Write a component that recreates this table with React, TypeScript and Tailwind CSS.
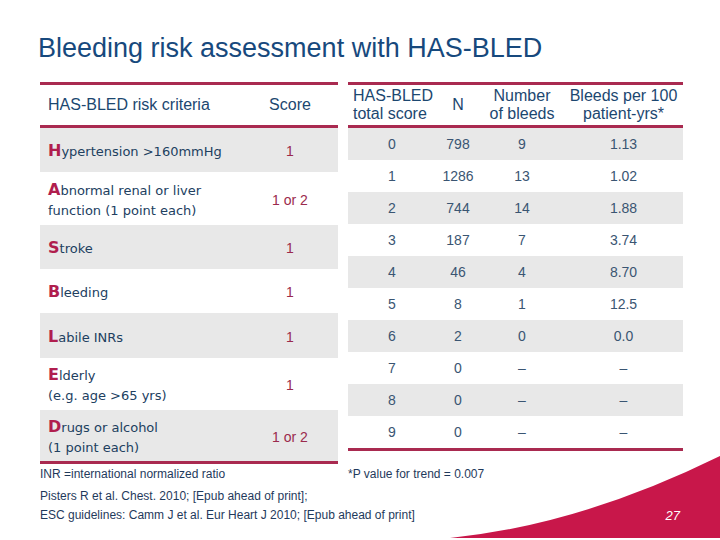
const criteria = [
  { lead: "H", text: "ypertension >160mmHg", score: "1", h: "h-[44px]", gray: true },
  { lead: "A", text: "bnormal renal or liver", sub: "function (1 point each)", score: "1 or 2", h: "h-[53px]", gray: false },
  { lead: "S", text: "troke", score: "1", h: "h-[44px]", gray: true },
  { lead: "B", text: "leeding", score: "1", h: "h-[44px]", gray: false },
  { lead: "L", text: "abile INRs", score: "1", h: "h-[45px]", gray: true },
  { lead: "E", text: "lderly", sub: "(e.g. age >65 yrs)", score: "1", h: "h-[52px]", gray: false },
  { lead: "D", text: "rugs or alcohol", sub: "(1 point each)", score: "1 or 2", h: "h-[51px]", gray: true },
];

const results = [
  ["0", "798", "9", "1.13"],
  ["1", "1286", "13", "1.02"],
  ["2", "744", "14", "1.88"],
  ["3", "187", "7", "3.74"],
  ["4", "46", "4", "8.70"],
  ["5", "8", "1", "12.5"],
  ["6", "2", "0", "0.0"],
  ["7", "0", "–", "–"],
  ["8", "0", "–", "–"],
  ["9", "0", "–", "–"],
];

const head = "font-['Liberation_Sans',Arial,sans-serif] text-[16px] text-[#1c4770]";

export default function App() {
  return (
    <div className="relative w-[720px] h-[540px] overflow-hidden bg-white">
      <h1 className="pt-[32px] pl-[38px] font-['Liberation_Sans',Arial,sans-serif] text-[27px] leading-[32px] text-[#17497d]">
        Bleeding risk assessment with HAS-BLED
      </h1>

      <div className="mt-[18px] flex items-start gap-[10px] pl-[40px]">
        {/* criteria */}
        <div className="w-[298px] border-b-[3px] border-[#a92a50]">
          <div className={`flex h-[46px] items-center border-y-[3px] border-[#a92a50] ${head}`}>
            <div className="flex-1 pl-[8px]">HAS-BLED risk criteria</div>
            <div className="w-[96px] text-center">Score</div>
          </div>
          {criteria.map((c) => (
            <div key={c.lead} className={`flex items-center pt-[3px] ${c.h} ${c.gray ? "bg-[#e8e8e8]" : ""}`}>
              <div className="flex-1 pl-[8px] font-['DejaVu_Sans',Verdana,sans-serif] text-[13px] leading-[20px] text-[#21405f]">
                <div>
                  <span className="text-[16px] font-bold text-[#b01e4e]">{c.lead}</span>
                  {c.text}
                </div>
                {c.sub && <div>{c.sub}</div>}
              </div>
              <div className="w-[96px] text-center font-['Liberation_Sans',Arial,sans-serif] text-[14px] text-[#9b2a4d]">
                {c.score}
              </div>
            </div>
          ))}
        </div>

        {/* results */}
        <div className="w-[335px] border-b-[3px] border-[#a92a50]">
          <div className={`flex h-[46px] items-center border-y-[3px] border-[#a92a50] leading-[18px] ${head}`}>
            <div className="w-[88px] pl-[5px]">
              HAS-BLED
              <br />
              total score
            </div>
            <div className="w-[44px] text-center">N</div>
            <div className="w-[84px] text-center">
              Number
              <br />
              of bleeds
            </div>
            <div className="flex-1 text-center">
              Bleeds per 100
              <br />
              patient-yrs*
            </div>
          </div>
          {results.map((r, i) => (
            <div
              key={r[0]}
              className={`flex h-[32px] items-center font-['Liberation_Sans',Arial,sans-serif] text-[14px] text-[#3a5572] ${i % 2 === 0 ? "bg-[#e8e8e8]" : ""}`}
            >
              <div className="w-[88px] text-center">{r[0]}</div>
              <div className="w-[44px] text-center">{r[1]}</div>
              <div className="w-[84px] text-center">{r[2]}</div>
              <div className="flex-1 text-center">{r[3]}</div>
            </div>
          ))}
        </div>
      </div>

      <div className="mt-[3px] flex pl-[40px] font-['Liberation_Sans',Arial,sans-serif] text-[12px] leading-[14px] text-[#1f3a5c]">
        <div className="w-[308px]">INR =international normalized ratio</div>
        <div>*P value for trend = 0.007</div>
      </div>

      <div className="mt-[6px] pl-[40px] font-['Liberation_Sans',Arial,sans-serif] text-[12px] leading-[19px] text-[#1f3a5c]">
        <div>Pisters R et al. Chest. 2010; [Epub ahead of print];</div>
        <div>ESC guidelines: Camm J et al. Eur Heart J 2010; [Epub ahead of print]</div>
      </div>

      {/* corner swoosh */}
      <svg className="absolute right-0 bottom-[2px]" width="270" height="82" viewBox="0 0 270 82">
        <path d="M0 82 Q130 69 270 0 L270 82 Z" fill="#c8174a" />
      </svg>
      <div className="absolute right-[40px] bottom-[15px] font-['Liberation_Sans',Arial,sans-serif] text-[13px] italic text-white">
        27
      </div>
    </div>
  );
}
